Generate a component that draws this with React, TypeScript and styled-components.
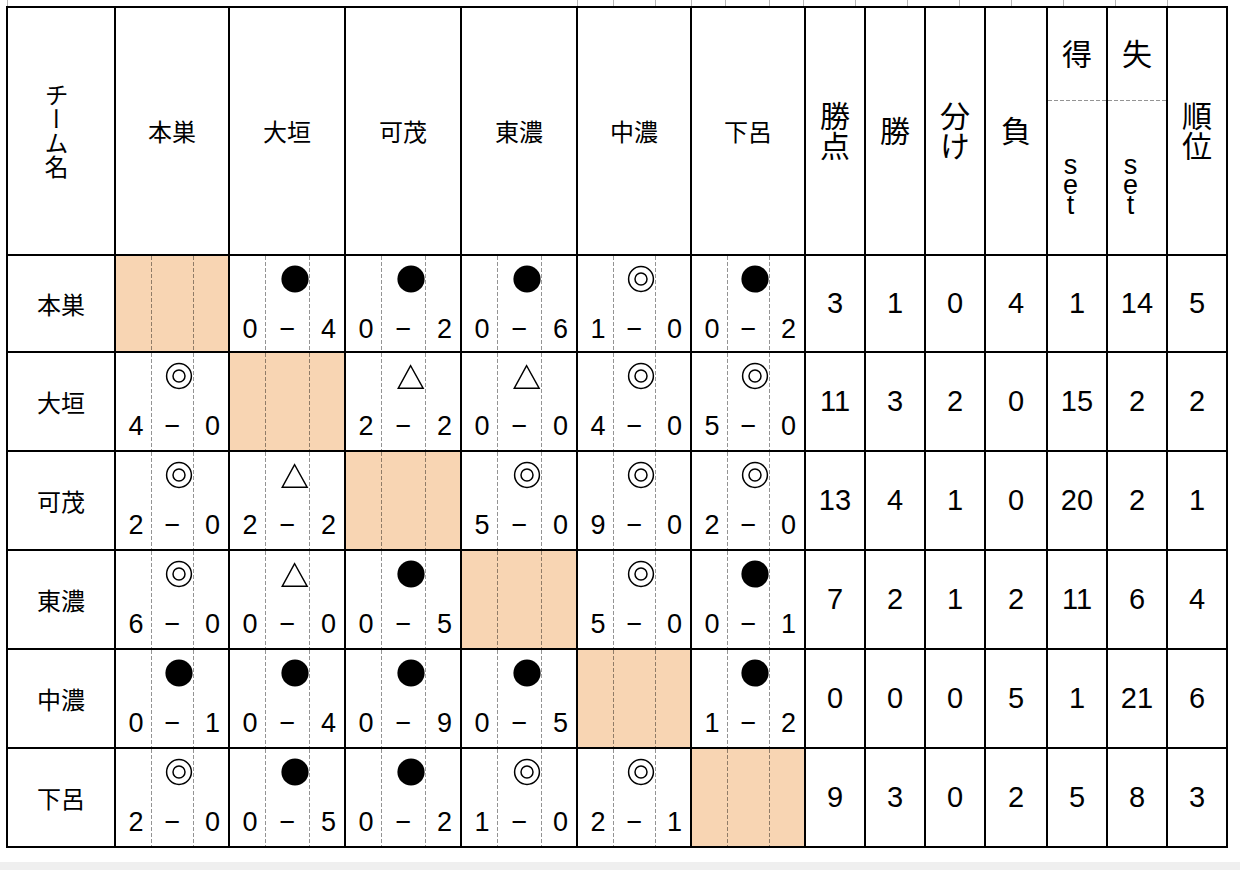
import React from "react";
import styled, { createGlobalStyle } from "styled-components";

const GlobalStyle = createGlobalStyle`
  html, body { margin: 0; padding: 0; background: #fff; }
  body { font-family: "Liberation Sans", "Noto Sans CJK JP", sans-serif; color: #000; }
`;

type MarkKind = "W" | "L" | "D";
type Result = [MarkKind, number, number] | null;

interface TeamRow {
  name: string;
  res: Result[];
  stats: number[];
}

const TEAMS = ["本巣", "大垣", "可茂", "東濃", "中濃", "下呂"];

const ROWS: TeamRow[] = [
  { name: "本巣", res: [null, ["L", 0, 4], ["L", 0, 2], ["L", 0, 6], ["W", 1, 0], ["L", 0, 2]], stats: [3, 1, 0, 4, 1, 14, 5] },
  { name: "大垣", res: [["W", 4, 0], null, ["D", 2, 2], ["D", 0, 0], ["W", 4, 0], ["W", 5, 0]], stats: [11, 3, 2, 0, 15, 2, 2] },
  { name: "可茂", res: [["W", 2, 0], ["D", 2, 2], null, ["W", 5, 0], ["W", 9, 0], ["W", 2, 0]], stats: [13, 4, 1, 0, 20, 2, 1] },
  { name: "東濃", res: [["W", 6, 0], ["D", 0, 0], ["L", 0, 5], null, ["W", 5, 0], ["L", 0, 1]], stats: [7, 2, 1, 2, 11, 6, 4] },
  { name: "中濃", res: [["L", 0, 1], ["L", 0, 4], ["L", 0, 9], ["L", 0, 5], null, ["L", 1, 2]], stats: [0, 0, 0, 5, 1, 21, 6] },
  { name: "下呂", res: [["W", 2, 0], ["L", 0, 5], ["L", 0, 2], ["W", 1, 0], ["W", 2, 1], null], stats: [9, 3, 0, 2, 5, 8, 3] },
];

const TICKS = [7, 577, 613, 655, 691, 725, 769, 803, 855, 907, 959, 1011, 1063, 1115, 1167];

const DASH_V = "repeating-linear-gradient(to bottom, rgba(0,0,0,0.42) 0 4px, transparent 4px 6px)";
const DASH_H = "repeating-linear-gradient(to right, rgba(0,0,0,0.42) 0 4px, transparent 4px 6px)";

const Page = styled.div`
  width: 1240px;
  height: 870px;
  overflow: hidden;
  display: flex;
  flex-direction: column;
  background: #fff;
`;

const TopStrip = styled.div`
  display: flex;
  height: 6px;
  flex: none;
`;

const TickGap = styled.div<{ $w: number }>`
  flex: none;
  box-sizing: border-box;
  width: ${(p) => p.$w}px;
  height: 6px;
  border-right: 1px solid #b6b6b6;
`;

const Board = styled.div`
  margin-left: 6px;
  width: max-content;
  display: grid;
  grid-template-columns: 108px 114px 116px 116px 116px 114px 114px 60px 60px 60px 62px 60px 60px 60px;
  grid-template-rows: 248px 97px repeat(5, 99px);
  border-top: 2px solid #000;
  border-left: 2px solid #000;
  flex: none;
`;

const Cell = styled.div`
  box-sizing: border-box;
  min-width: 0;
  overflow: hidden;
  border-right: 2px solid #000;
  border-bottom: 2px solid #000;
`;

const CenterCell = styled(Cell)`
  display: flex;
  align-items: center;
  justify-content: center;
`;

const NameText = styled.span`
  font-family: "Noto Sans CJK JP", sans-serif;
  font-size: 24px;
  line-height: 1;
  white-space: nowrap;
`;

const CornerCell = styled(CenterCell)`
  padding-right: 10px;
`;

const VText = styled.span<{ $size: number }>`
  font-family: "Noto Sans CJK JP", sans-serif;
  writing-mode: vertical-rl;
  text-orientation: upright;
  font-size: ${(p) => p.$size}px;
  line-height: 1;
  white-space: nowrap;
`;

const GoalHead = styled(Cell)`
  display: grid;
  grid-template-rows: 93px 1fr;
`;

const GoalTop = styled.div`
  display: flex;
  align-items: center;
  justify-content: center;
  padding-bottom: 5px;
  background: ${DASH_H} left bottom / 100% 1px no-repeat;
  font-family: "Noto Sans CJK JP", sans-serif;
  font-size: 30px;
  line-height: 1;
`;

const GoalBottom = styled.div`
  display: flex;
  justify-content: center;
  align-items: flex-start;
  padding-right: 14px;
`;

const SetText = styled.span`
  margin-top: 49px;
  writing-mode: vertical-rl;
  text-orientation: upright;
  font-family: "Liberation Sans", sans-serif;
  font-size: 27px;
  line-height: 27px;
  letter-spacing: -10px;
  white-space: nowrap;
`;

const ScoreCell = styled(Cell)<{ $self: boolean }>`
  display: grid;
  grid-template-columns: 36px 1fr 35px;
  grid-template-rows: 60px 1fr;
  background: ${DASH_V} 35px 0 / 1px 100% no-repeat,
    ${DASH_V} right 34px top 0 / 1px 100% no-repeat,
    ${(p) => (p.$self ? "#f8d5b3" : "#fff")};
`;

const MarkBox = styled.div`
  grid-column: 2;
  grid-row: 1;
  justify-self: end;
  align-self: start;
  margin-top: 9px;
  width: 28px;
  height: 28px;
  display: flex;
`;

const ScoreNum = styled.span<{ $col: number; $pad?: number }>`
  grid-row: 2;
  grid-column: ${(p) => p.$col};
  align-self: start;
  text-align: center;
  padding-left: ${(p) => p.$pad ?? 0}px;
  font-size: 27px;
  line-height: 27px;
  font-family: "Liberation Sans", sans-serif;
`;

const StatCell = styled(CenterCell)`
  font-size: 29px;
  line-height: 1;
  font-family: "Liberation Sans", sans-serif;
`;

const BottomBand = styled.div`
  margin-top: 14px;
  flex: 1;
  background: #efefef;
`;

const MarkIcon: React.FC<{ kind: MarkKind }> = ({ kind }) => {
  if (kind === "L") {
    return (
      <svg width="28" height="28" viewBox="0 0 28 28" aria-label="●">
        <circle cx="14" cy="14" r="13.6" fill="#000" />
      </svg>
    );
  }
  if (kind === "W") {
    return (
      <svg width="28" height="28" viewBox="0 0 28 28" aria-label="◎">
        <circle cx="14" cy="14" r="12.4" fill="none" stroke="#000" strokeWidth="1.5" />
        <circle cx="14" cy="14" r="6" fill="none" stroke="#000" strokeWidth="1.5" />
      </svg>
    );
  }
  return (
    <svg width="28" height="28" viewBox="0 0 28 28" aria-label="△">
      <polygon points="13.6,3.6 1.2,26.3 26.2,26.3" fill="none" stroke="#000" strokeWidth="1.4" strokeLinejoin="miter" />
    </svg>
  );
};

const ScoreBox: React.FC<{ r: Result }> = ({ r }) => (
  <ScoreCell $self={r === null}>
    {r && (
      <>
        <MarkBox>
          <MarkIcon kind={r[0]} />
        </MarkBox>
        <ScoreNum $col={1} $pad={4}>{r[1]}</ScoreNum>
        <ScoreNum $col={2}>−</ScoreNum>
        <ScoreNum $col={3} $pad={4}>{r[2]}</ScoreNum>
      </>
    )}
  </ScoreCell>
);

const App: React.FC = () => {
  const gaps = TICKS.map((x, i) => (i === 0 ? x + 1 : x - TICKS[i - 1]));
  return (
    <Page>
      <GlobalStyle />
      <TopStrip>
        {gaps.map((w, i) => (
          <TickGap key={i} $w={w} />
        ))}
      </TopStrip>
      <Board>
        <CornerCell>
          <VText $size={24}>チーム名</VText>
        </CornerCell>
        {TEAMS.map((t) => (
          <CenterCell key={t}>
            <NameText>{t}</NameText>
          </CenterCell>
        ))}
        <CenterCell>
          <VText $size={30}>勝点</VText>
        </CenterCell>
        <CenterCell>
          <VText $size={30}>勝</VText>
        </CenterCell>
        <CenterCell>
          <VText $size={30}>分け</VText>
        </CenterCell>
        <CenterCell>
          <VText $size={30}>負</VText>
        </CenterCell>
        {["得", "失"].map((h) => (
          <GoalHead key={h}>
            <GoalTop>{h}</GoalTop>
            <GoalBottom>
              <SetText>set</SetText>
            </GoalBottom>
          </GoalHead>
        ))}
        <CenterCell>
          <VText $size={30}>順位</VText>
        </CenterCell>

        {ROWS.map((row) => (
          <React.Fragment key={row.name}>
            <CenterCell>
              <NameText>{row.name}</NameText>
            </CenterCell>
            {row.res.map((r, i) => (
              <ScoreBox key={i} r={r} />
            ))}
            {row.stats.map((s, i) => (
              <StatCell key={i}>{s}</StatCell>
            ))}
          </React.Fragment>
        ))}
      </Board>
      <BottomBand />
    </Page>
  );
};

export default App;
